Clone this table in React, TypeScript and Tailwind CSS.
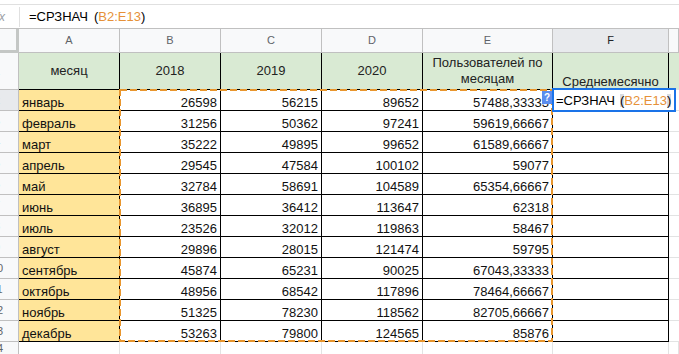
const data: string[][] = [
  ["январь", "26598", "56215", "89652", "57488,33333"],
  ["февраль", "31256", "50362", "97241", "59619,66667"],
  ["март", "35222", "49895", "99652", "61589,66667"],
  ["апрель", "29545", "47584", "100102", "59077"],
  ["май", "32784", "58691", "104589", "65354,66667"],
  ["июнь", "36895", "36412", "113647", "62318"],
  ["июль", "23526", "32012", "119863", "58467"],
  ["август", "29896", "28015", "121474", "59795"],
  ["сентябрь", "45874", "65231", "90025", "67043,33333"],
  ["октябрь", "48956", "68542", "117896", "78464,66667"],
  ["ноябрь", "51325", "78230", "118562", "82705,66667"],
  ["декабрь", "53263", "79800", "124565", "85876"],
];

const cols = "grid grid-cols-[19px_101px_101px_101px_101px_130px_116px_1fr]";

function RowHead({ n, active }: { n: number; active?: boolean }) {
  return (
    <div
      className={`overflow-hidden border-r border-b border-[#c0c0c0] ${
        active ? "bg-[#e8eaed]" : "bg-[#f8f9fa]"
      }`}
    >
      <div className="ml-[-26px] flex h-full w-[46px] items-center justify-center text-[11px] text-[#5f6368]">
        {n}
      </div>
    </div>
  );
}

export default function App() {
  return (
    <div className="relative h-[354px] w-[679px] overflow-hidden bg-white font-['Liberation_Sans',Arial,sans-serif] text-black">
      <div className="h-[5px] border-b border-[#e0e0e0]" />
      {/* formula bar */}
      <div className="flex h-[24px] items-center border-b border-[#c0c0c0]">
        <div className="flex h-full w-[19px] items-center justify-end overflow-hidden pr-[14px] text-[12px] italic text-[#9aa0a6]">
          fx
        </div>
        <div className="h-[20px] w-px bg-[#e0e0e0]" />
        <div className="pl-[9px] text-[13px] leading-none">
          =СРЗНАЧ<span className="ml-[6px]">(</span>
          <span className="text-[#e69138]">B2:E13</span>)
        </div>
      </div>

      {/* column letters */}
      <div className={`${cols} h-[24px]`}>
        <div className="border-r-[3px] border-b-[3px] border-[#c4c7c5] bg-[#f8f9fa]" />
        {["A", "B", "C", "D", "E", "F", ""].map((c) => (
          <div
            key={c || "g"}
            className={`flex items-center justify-center border-r border-b border-[#c0c0c0] text-[11px] ${
              c === "F" ? "bg-[#e8eaed] text-[#202124]" : "bg-[#f8f9fa] text-[#5f6368]"
            }`}
          >
            {c}
          </div>
        ))}
      </div>

      {/* header row */}
      <div className={`${cols} h-[37px] text-[13px] text-[#222]`}>
        <RowHead n={1} />
        {["месяц", "2018", "2019", "2020"].map((t) => (
          <div key={t} className="flex items-center justify-center border-r border-b border-black bg-[#d9ead3]">
            {t}
          </div>
        ))}
        <div className="flex items-center justify-center border-r border-b border-black bg-[#d9ead3] px-[3px] text-center leading-[16px]">
          Пользователей по месяцам
        </div>
        <div className="flex items-end justify-center border-r border-b border-black bg-[#d9ead3] leading-[15px]">
          Среднемесячно
        </div>
        <div className="border-b border-[#e2e3e3] bg-[#d9ead3]" />
      </div>

      {/* data rows */}
      {data.map((r, i) => (
        <div key={r[0]} className={`${cols} h-[21px] text-[13px] leading-[15px] text-[#111]`}>
          <RowHead n={i + 2} active={i === 0} />
          <div className="flex items-end border-r border-b border-black bg-[#ffe599] pl-[3px]">{r[0]}</div>
          {r.slice(1).map((v, j) => (
            <div key={j} className="flex items-end justify-end border-r border-b border-black pr-[3px]">
              {v}
            </div>
          ))}
          <div className="border-r border-b border-black" />
          <div className="border-b border-[#e2e3e3]" />
        </div>
      ))}

      {/* row 14 */}
      <div className={`${cols} h-[13px]`}>
        <RowHead n={14} />
        {[0, 1, 2, 3, 4, 5, 6].map((k) => (
          <div key={k} className="border-r border-[#e2e3e3]" />
        ))}
      </div>

      {/* range highlight */}
      <svg className="absolute left-[119px] top-[89px]" width="434" height="253">
        <rect x="1" y="1" width="432" height="251" fill="none" stroke="#e8962e" strokeWidth="2" strokeDasharray="7 3" />
      </svg>

      {/* help badge */}
      <div className="absolute left-[542px] top-[91px] flex h-[13px] w-[10px] items-center justify-center bg-[#5b8def] text-[10px] font-bold leading-none text-white">
        ?
      </div>

      {/* cell editor */}
      <div className="absolute left-[552px] top-[88px] flex h-[24px] w-[124px] items-center border-2 border-[#1a73e8] bg-white pl-[2px] text-[13px] leading-none">
        =СРЗНАЧ<span className="ml-[5px] bg-[#dadce0]">(</span>
        <span className="text-[#e69138]">B2:E13</span>
        <span className="bg-[#dadce0]">)</span>
      </div>
    </div>
  );
}
